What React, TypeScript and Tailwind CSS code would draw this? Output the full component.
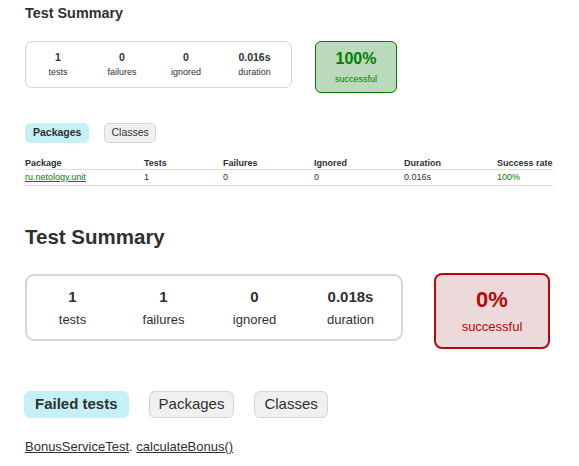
const font = { fontFamily: '"Liberation Sans", Arial, sans-serif' }

type Stat = { value: string; label: string; width: string }

const topStats: Stat[] = [
  { value: "1", label: "tests", width: "w-[64px]" },
  { value: "0", label: "failures", width: "w-[64px]" },
  { value: "0", label: "ignored", width: "w-[64px]" },
  { value: "0.016s", label: "duration", width: "w-[73px]" },
]

const bottomStats: Stat[] = [
  { value: "1", label: "tests", width: "w-[91px]" },
  { value: "1", label: "failures", width: "w-[91px]" },
  { value: "0", label: "ignored", width: "w-[91px]" },
  { value: "0.018s", label: "duration", width: "w-[101px]" },
]

const columns = [
  { name: "Package", width: "w-[119px]" },
  { name: "Tests", width: "w-[79px]" },
  { name: "Failures", width: "w-[91px]" },
  { name: "Ignored", width: "w-[90px]" },
  { name: "Duration", width: "w-[93px]" },
  { name: "Success rate", width: "w-[56px]" },
]

const SmallReport = () => (
  <div className="flex flex-col">
    <div className="mt-[5px] h-[17px] text-[14.4px] leading-[17px] font-bold">Test Summary</div>

    <div className="mt-[19px] flex items-start">
      <div className="flex rounded-[7px] border border-[#d4d4d4] pt-[9px] pb-[8px]">
        {topStats.map((s) => (
          <div key={s.label} className={`${s.width} flex flex-col items-center`}>
            <div className="text-[10.5px] leading-[13px] font-bold">{s.value}</div>
            <div className="mt-[2px] text-[9px] leading-[13px]">{s.label}</div>
          </div>
        ))}
      </div>
      <div className="ml-[23px] flex h-[52px] w-[82px] flex-col items-center rounded-[6px] border border-[#008000] bg-[#bbd9bb] pt-[8px] text-[#008000]">
        <div className="text-[16px] leading-[18px] font-bold">100%</div>
        <div className="mt-[5px] text-[9px] leading-[12px]">successful</div>
      </div>
    </div>

    <div className="mt-[30px] flex gap-[15px]">
      <div className="flex h-[20px] items-center rounded-[5px] border border-[#c5f0f5] bg-[#c5f0f5] px-[7px] text-[10.5px] font-bold">
        Packages
      </div>
      <div className="flex h-[20px] items-center rounded-[5px] border border-[#d4d4d4] bg-[#f0f0f0] px-[6px] text-[10.5px]">
        Classes
      </div>
    </div>

    <div className="mt-[14px] flex w-[528px] flex-col text-[9px]">
      <div className="flex h-[13px] border-b border-[#dddddd] font-bold leading-[12px]">
        {columns.map((c) => (
          <div key={c.name} className={c.width}>
            {c.name}
          </div>
        ))}
      </div>
      <div className="flex h-[16px] items-center border-b border-[#dddddd]">
        <div className="w-[119px] text-[#008000] underline">ru.netology.unit</div>
        <div className="w-[79px]">1</div>
        <div className="w-[91px]">0</div>
        <div className="w-[90px]">0</div>
        <div className="w-[93px]">0.016s</div>
        <div className="w-[56px] text-[#008000]">100%</div>
      </div>
    </div>
  </div>
)

const LargeReport = () => (
  <div className="flex flex-col">
    <div className="mt-[39px] h-[23px] text-[20.5px] leading-[23px] font-bold">Test Summary</div>

    <div className="mt-[26px] flex items-start">
      <div className="flex rounded-[9px] border-2 border-[#d6d6d6] pt-[12px] pb-[11px]">
        {bottomStats.map((s) => (
          <div key={s.label} className={`${s.width} flex flex-col items-center`}>
            <div className="text-[15px] leading-[18px] font-bold">{s.value}</div>
            <div className="mt-[6px] text-[13px] leading-[16px]">{s.label}</div>
          </div>
        ))}
      </div>
      <div className="ml-[31px] -mt-[1px] flex h-[76px] w-[116px] flex-col items-center rounded-[8px] border-2 border-[#b60808] bg-[#ecdada] pt-[12px] text-[#b60808]">
        <div className="text-[22px] leading-[25px] font-bold">0%</div>
        <div className="mt-[7px] text-[13px] leading-[16px]">successful</div>
      </div>
    </div>

    <div className="mt-[42px] -ml-[1px] flex gap-[20px] text-[15px]">
      <div className="flex h-[27px] items-center rounded-[6px] border border-[#c5f0f5] bg-[#c5f0f5] px-[10px] font-bold">
        Failed tests
      </div>
      <div className="flex h-[27px] items-center rounded-[6px] border border-[#d4d4d4] bg-[#f0f0f0] px-[9px]">
        Packages
      </div>
      <div className="flex h-[27px] items-center rounded-[6px] border border-[#d4d4d4] bg-[#f0f0f0] px-[9px]">
        Classes
      </div>
    </div>

    <div className="mt-[21px] text-[13px] leading-[16px]">
      <span className="underline">BonusServiceTest</span>. <span className="underline">calculateBonus()</span>
    </div>
  </div>
)

export default function App() {
  return (
    <div className="h-[466px] w-[579px] overflow-hidden bg-white pl-[25px] text-[#303030]" style={font}>
      <SmallReport />
      <LargeReport />
    </div>
  )
}
